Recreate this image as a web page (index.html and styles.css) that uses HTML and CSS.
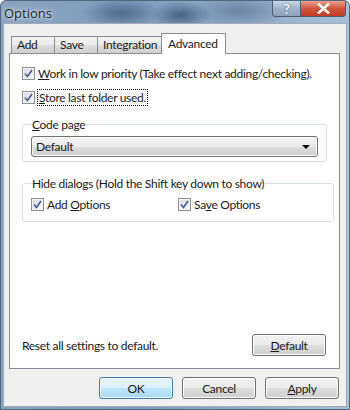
FILE: index.html
```html
<!DOCTYPE html>
<html lang="en">
<head>
    <meta charset="UTF-8">
    <title>Options</title>
    <link rel="stylesheet" href="styles.css">
</head>
<body>
    <div class="window">
        <div class="titlebar">
            <span class="title">Options</span>
            <div class="caption">
                <span class="cap-btn help">?</span>
                <span class="cap-btn close">
                    <svg width="13" height="11" viewBox="0 0 13 11">
                        <path d="M2 1.5 L11 9.5 M11 1.5 L2 9.5" stroke="#fff" stroke-width="2.6" stroke-linecap="square"/>
                    </svg>
                </span>
            </div>
        </div>

        <div class="client">
            <div class="tabs">
                <span class="tab tab-add">Add</span>
                <span class="tab tab-save">Save</span>
                <span class="tab tab-int">Integration</span>
                <span class="tab active">Advanced</span>
            </div>

            <div class="panel">
                <label class="check-row">
                    <span class="check"><svg width="9" height="9" viewBox="0 0 9 9"><path d="M1 4.5 L3.5 7.5 L8 1" fill="none" stroke="#3d58a0" stroke-width="1.6"/></svg></span>
                    <span><u>W</u>ork in low priority (Take effect next adding/checking).</span>
                </label>
                <label class="check-row second">
                    <span class="check"><svg width="9" height="9" viewBox="0 0 9 9"><path d="M1 4.5 L3.5 7.5 L8 1" fill="none" stroke="#3d58a0" stroke-width="1.6"/></svg></span>
                    <span class="focused"><u>S</u>tore last folder used.</span>
                </label>

                <fieldset class="group group-code">
                    <legend><u>C</u>ode page</legend>
                    <div class="combo">
                        <span>Default</span>
                        <svg width="8" height="4" viewBox="0 0 8 4"><path d="M0 0 H8 L4 4 Z" fill="#000"/></svg>
                    </div>
                </fieldset>

                <fieldset class="group group-hide">
                    <legend>Hide dialogs (Hold the Shift key down to show)</legend>
                    <div class="hide-row">
                        <label class="check-row">
                            <span class="check"><svg width="9" height="9" viewBox="0 0 9 9"><path d="M1 4.5 L3.5 7.5 L8 1" fill="none" stroke="#3d58a0" stroke-width="1.6"/></svg></span>
                            <span>Add <u>O</u>ptions</span>
                        </label>
                        <label class="check-row">
                            <span class="check"><svg width="9" height="9" viewBox="0 0 9 9"><path d="M1 4.5 L3.5 7.5 L8 1" fill="none" stroke="#3d58a0" stroke-width="1.6"/></svg></span>
                            <span>Sa<u>v</u>e Options</span>
                        </label>
                    </div>
                </fieldset>

                <div class="reset-row">
                    <span>Reset all settings to default.</span>
                    <button class="btn"><u>D</u>efault</button>
                </div>
            </div>

            <div class="buttons">
                <button class="btn default">OK</button>
                <button class="btn">Cancel</button>
                <button class="btn"><u>A</u>pply</button>
            </div>
        </div>
    </div>
</body>
</html>
```

FILE: styles.css
```css
* {
    box-sizing: border-box;
}

body {
    margin: 0;
    width: 350px;
    height: 410px;
    overflow: hidden;
    font-family: Lato, "Open Sans", sans-serif;
    font-size: 12px;
    letter-spacing: -0.3px;
    color: #1a1a1a;
    white-space: nowrap;
}

.window {
    width: 350px;
    height: 410px;
    display: flex;
    flex-direction: column;
    background:
        radial-gradient(ellipse 40px 14px at 120px 12px, rgba(40, 65, 100, 0.55), transparent),
        radial-gradient(ellipse 30px 14px at 180px 14px, rgba(30, 55, 90, 0.6), transparent),
        radial-gradient(ellipse 50px 16px at 240px 10px, rgba(50, 75, 110, 0.4), transparent),
        linear-gradient(to right, #8aa3bf, #7f9bbd 40%, #92abc8 70%, #a9bfd6);
    border: 1px solid #4f6780;
    border-radius: 6px 6px 0 0;
}

.titlebar {
    height: 22px;
    display: flex;
    align-items: flex-start;
    padding-left: 3px;
}

.title {
    padding-top: 3px;
    font-family: "Open Sans", sans-serif;
    font-size: 13px;
    letter-spacing: 0;
    color: #1b1b1b;
    text-shadow: 0 0 6px #e8f0f8, 0 0 3px #e8f0f8;
}

.caption {
    margin-left: auto;
    margin-right: 3px;
    display: flex;
}

.cap-btn {
    height: 16px;
    display: flex;
    align-items: center;
    justify-content: center;
    border: 1px solid #4c5b6e;
    border-top: none;
}

.help {
    width: 29px;
    border-radius: 0 0 0 4px;
    background: linear-gradient(#c9d6e4, #9fb2c8 50%, #8ea3bb);
    color: #fff;
    font-weight: bold;
    font-size: 13px;
    text-shadow: 0 0 2px #3c4f66;
}

.close {
    width: 45px;
    border-left: none;
    border-radius: 0 0 4px 0;
    background: linear-gradient(#e8a190, #d0563f 50%, #c13d23);
}

.client {
    flex: 1;
    margin: 0 2px 2px;
    background: #f0f0f0;
    border: 1px solid #a0aab8;
    display: flex;
    flex-direction: column;
    padding: 9px 6px 0 5px;
}

.tabs {
    display: flex;
    align-items: flex-end;
    height: 20px;
    padding-left: 2px;
}

.tab {
    height: 17px;
    padding: 0 5px;
    line-height: 16px;
    border: 1px solid #898c95;
    border-bottom: none;
    border-right: none;
    background: linear-gradient(#f2f2f2, #ebebeb 50%, #dddddd 50%, #cfcfcf);
}

.tab-add { width: 43px; }
.tab-save { width: 43px; }
.tab-int { width: 66px; }

.tab.active {
    height: 21px;
    width: 65px;
    margin-left: -2px;
    margin-bottom: -1px;
    line-height: 19px;
    padding: 0 6px;
    background: #fff;
    border-right: 1px solid #898c95;
    position: relative;
    z-index: 1;
}

.panel {
    height: 316px;
    background: #fff;
    border: 1px solid #898c95;
    padding: 12px 12px 0 12px;
    display: flex;
    flex-direction: column;
}

.check-row {
    display: flex;
    align-items: center;
    gap: 3px;
    height: 15px;
}

.check-row.second {
    margin-top: 9px;
}

.check {
    width: 13px;
    height: 13px;
    flex: none;
    border: 1px solid #8e8f8f;
    background: linear-gradient(135deg, #dcdcdc, #fbfbfb);
    display: flex;
    align-items: center;
    justify-content: center;
    box-shadow: inset 0 0 0 1px #f4f4f4;
}

.focused {
    outline: 1px dotted #000;
    outline-offset: 0;
    padding: 0 1px;
}

.group {
    margin: 0;
    border: 1px solid #d5dfe5;
    border-radius: 3px;
    padding: 0 8px;
}

.group legend {
    padding: 0 1px;
    margin-left: 0;
}

.group-code {
    margin-top: 12px;
    height: 45px;
}

.combo {
    margin-top: 4px;
    height: 21px;
    border: 1px solid #707070;
    border-radius: 3px;
    background: linear-gradient(#f2f2f2, #ebebeb 50%, #dddddd 50%, #cfcfcf);
    display: flex;
    align-items: center;
    justify-content: space-between;
    padding: 0 7px 0 4px;
    box-shadow: inset 0 0 0 1px #fcfcfc;
}

.group-hide {
    margin-top: 14px;
    height: 46px;
}

.hide-row {
    display: flex;
    margin-top: 6px;
}

.hide-row .check-row {
    width: 147px;
}

.reset-row {
    margin-top: auto;
    margin-bottom: 12px;
    display: flex;
    align-items: center;
    justify-content: space-between;
    padding-right: 1px;
}

.btn {
    width: 74px;
    height: 22px;
    font: inherit;
    letter-spacing: inherit;
    color: #1a1a1a;
    border: 1px solid #707070;
    border-radius: 3px;
    background: linear-gradient(#f2f2f2, #ebebeb 50%, #dddddd 50%, #cfcfcf);
    box-shadow: inset 0 0 0 1px #fcfcfc;
    padding: 0;
}

.btn.default {
    border-color: #3c7fb1;
    background: linear-gradient(#eaf6fd, #d9f0fc 50%, #bee6fd 50%, #a7d9f5);
}

.buttons {
    display: flex;
    justify-content: flex-end;
    gap: 9px;
    padding-top: 8px;
    padding-right: 1px;
}
```
